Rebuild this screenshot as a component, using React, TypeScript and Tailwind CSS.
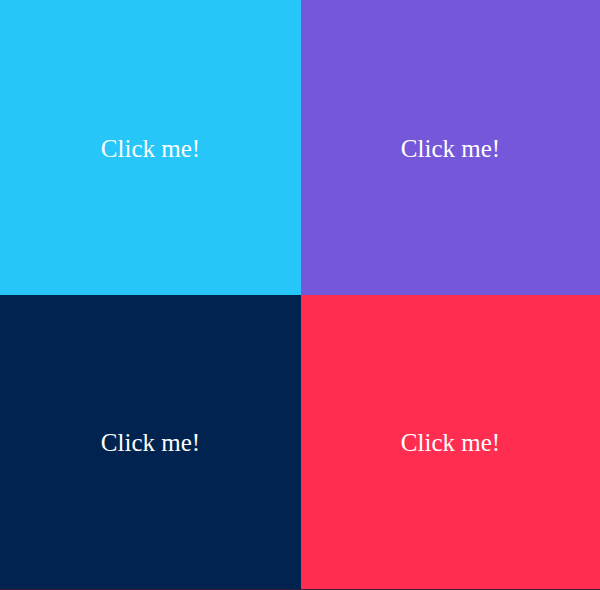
import React from "react";

const cells = [
  "bg-[#26c6f9]",
  "bg-[#7557d9]",
  "bg-[#00234f]",
  "bg-[#ff2d4f]",
];

export default function App() {
  return (
    <div className="w-[600px] h-[590px] bg-[#3a1a3a] flex flex-col">
      <div className="grid grid-cols-[301px_299px] grid-rows-[295px_294px]">
        {cells.map((c, i) => (
          <button
            key={i}
            className={`${c} flex items-center justify-center text-white text-[25px] pt-[2px]`}
            style={{ fontFamily: '"Liberation Serif", serif' }}
          >
            Click me!
          </button>
        ))}
      </div>
    </div>
  );
}
